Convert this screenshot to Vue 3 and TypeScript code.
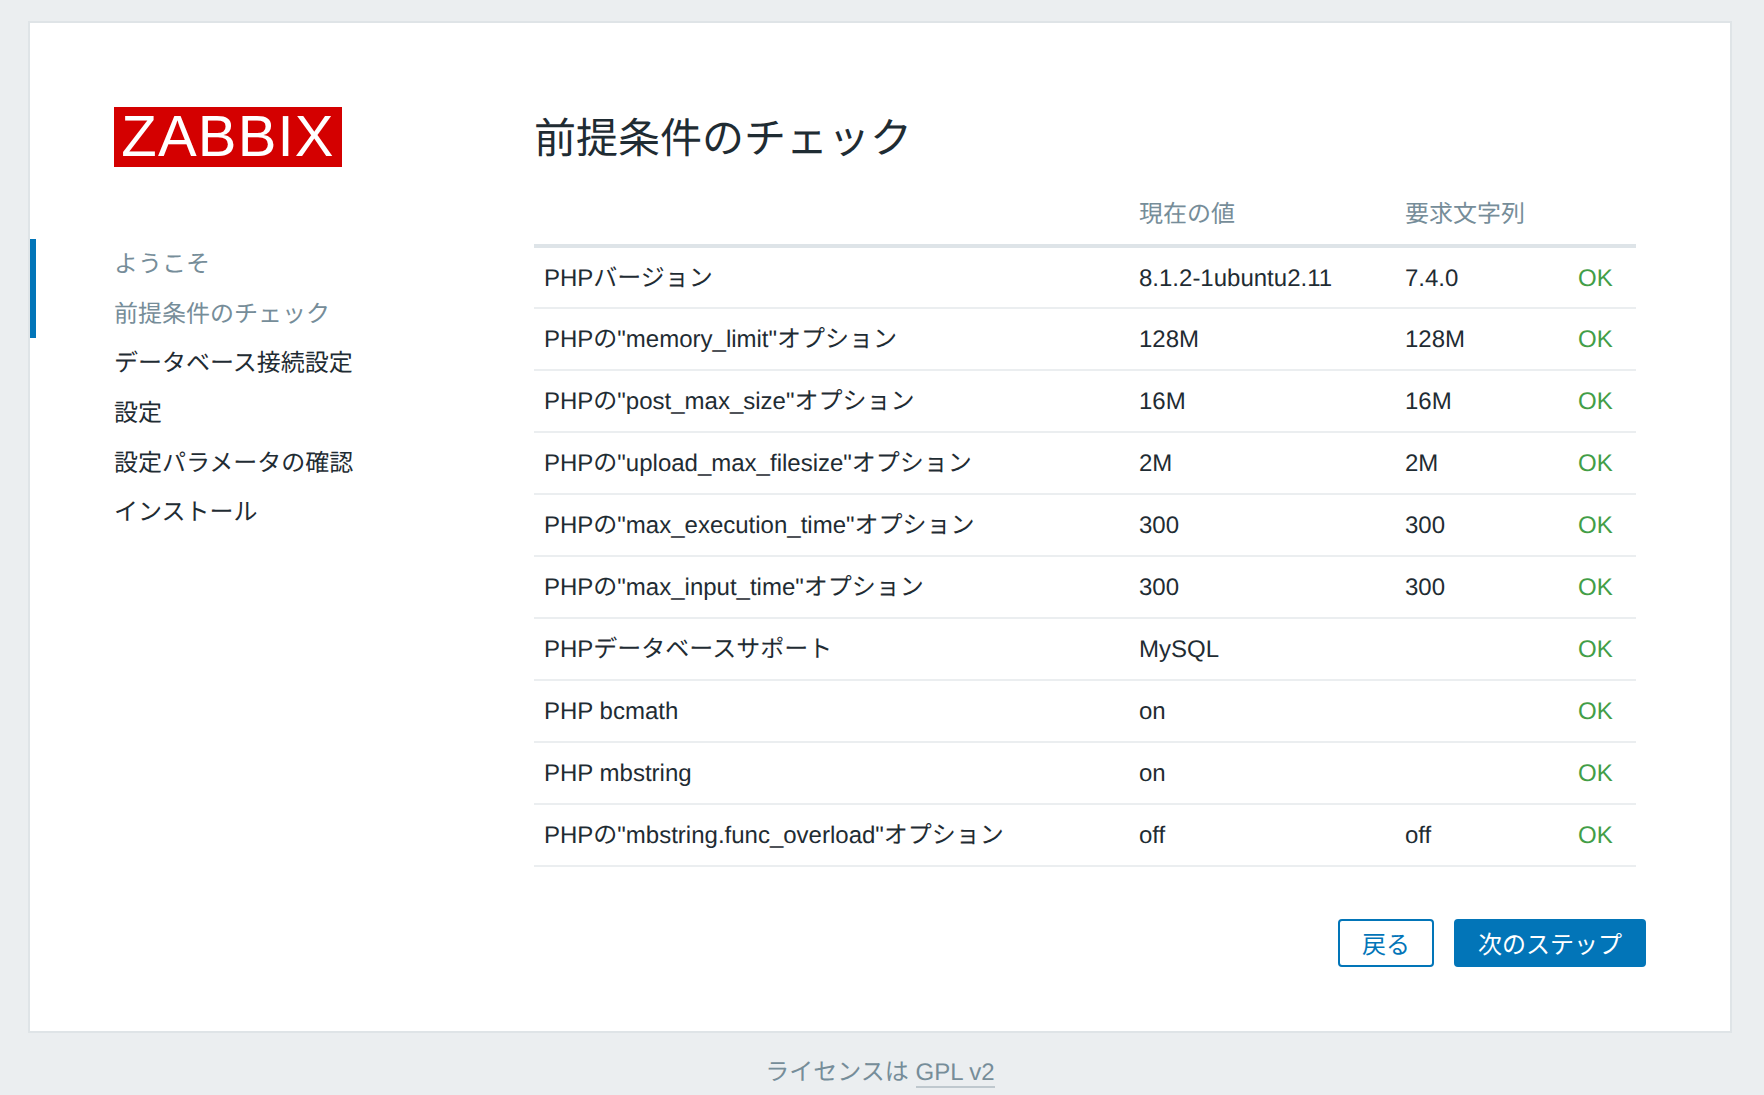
<script setup lang="ts">
interface Check {
  name: string
  current: string
  required: string
}

const steps = [
  { label: 'ようこそ', done: true },
  { label: '前提条件のチェック', done: true },
  { label: 'データベース接続設定', done: false },
  { label: '設定', done: false },
  { label: '設定パラメータの確認', done: false },
  { label: 'インストール', done: false },
]

const checks: Check[] = [
  { name: 'PHPバージョン', current: '8.1.2-1ubuntu2.11', required: '7.4.0' },
  { name: 'PHPの"memory_limit"オプション', current: '128M', required: '128M' },
  { name: 'PHPの"post_max_size"オプション', current: '16M', required: '16M' },
  { name: 'PHPの"upload_max_filesize"オプション', current: '2M', required: '2M' },
  { name: 'PHPの"max_execution_time"オプション', current: '300', required: '300' },
  { name: 'PHPの"max_input_time"オプション', current: '300', required: '300' },
  { name: 'PHPデータベースサポート', current: 'MySQL', required: '' },
  { name: 'PHP bcmath', current: 'on', required: '' },
  { name: 'PHP mbstring', current: 'on', required: '' },
  { name: 'PHPの"mbstring.func_overload"オプション', current: 'off', required: 'off' },
]
</script>

<template>
  <div class="page">
    <div class="setup">
      <aside class="setup__side">
        <div class="logo">ZABBIX</div>
        <ul class="steps">
          <li
            v-for="step in steps"
            :key="step.label"
            class="steps__item"
            :class="{ 'steps__item--done': step.done }"
          >
            {{ step.label }}
          </li>
        </ul>
      </aside>

      <main class="setup__main">
        <h1 class="title">前提条件のチェック</h1>
        <table class="checks">
          <thead>
            <tr>
              <th class="col-name"></th>
              <th class="col-current">現在の値</th>
              <th class="col-required">要求文字列</th>
              <th class="col-status"></th>
            </tr>
          </thead>
          <tbody>
            <tr v-for="row in checks" :key="row.name">
              <td>{{ row.name }}</td>
              <td>{{ row.current }}</td>
              <td>{{ row.required }}</td>
              <td class="ok">OK</td>
            </tr>
          </tbody>
        </table>
        <div class="actions">
          <button class="btn btn--alt" type="button">戻る</button>
          <button class="btn" type="button">次のステップ</button>
        </div>
      </main>
    </div>

    <footer class="license">ライセンスは <a class="license__link">GPL v2</a></footer>
  </div>
</template>

<style>
html,
body {
  margin: 0;
  background: #ebeef0;
}
</style>

<style scoped>
.page {
  box-sizing: border-box;
  height: 1095px;
  padding: 21px 32px 0 28px;
  overflow: hidden;
  font-family: "Liberation Sans", "Noto Sans CJK JP", sans-serif;
  font-size: 24px;
  line-height: 28px;
  text-rendering: geometricPrecision;
  color: #1f2c33;
  background: #ebeef0;
}

.setup {
  box-sizing: border-box;
  display: flex;
  height: 1012px;
  background: #fff;
  border: 2px solid #dfe4e7;
}

.setup__side {
  flex-shrink: 0;
  width: 504px;
  padding-top: 84px;
}

.logo {
  box-sizing: border-box;
  width: 228px;
  height: 60px;
  margin-left: 84px;
  font-size: 58px;
  line-height: 60px;
  letter-spacing: 1.2px;
  text-align: center;
  color: #fff;
  background: #d40000;
}

.steps {
  margin: 72px 0 0;
  padding: 0;
  list-style: none;
}

.steps__item {
  box-sizing: border-box;
  height: 49.67px;
  padding-top: 1px;
  padding-left: 78px;
  line-height: 49.67px;
  border-left: 6px solid transparent;
}

.steps__item--done {
  color: #768d99;
  border-left-color: #0275b8;
}

.setup__main {
  flex: 1;
  min-width: 0;
  padding-top: 84px;
}

.title {
  height: 76px;
  margin: 0;
  font-size: 42px;
  font-weight: 400;
  line-height: 64px;
}

.checks {
  width: 1102px;
  table-layout: fixed;
  border-collapse: collapse;
}

.checks th {
  box-sizing: border-box;
  height: 63px;
  padding: 3px 10px 0;
  font-weight: 400;
  text-align: left;
  color: #768d99;
  border-bottom: 4px solid #dee4e8;
}

.checks td {
  box-sizing: border-box;
  height: 62px;
  padding: 2px 10px 0;
  border-bottom: 2px solid #ebeef0;
}

.col-name {
  width: 595px;
}

.col-current {
  width: 266px;
}

.col-required {
  width: 173px;
}

.col-status {
  width: 68px;
}

.checks .ok {
  color: #429e47;
}

.actions {
  display: flex;
  justify-content: flex-end;
  gap: 20px;
  width: 1112px;
  margin-top: 52px;
}

.btn {
  box-sizing: border-box;
  height: 48px;
  padding: 4px 22px 0;
  font: inherit;
  color: #fff;
  background: #0275b8;
  border: 2px solid #0275b8;
  border-radius: 4px;
}

.btn--alt {
  color: #0275b8;
  background: #fff;
}

.license {
  margin-top: 26px;
  text-align: center;
  color: #768d99;
}

.license__link {
  border-bottom: 2px solid #bfc8ce;
}
</style>
